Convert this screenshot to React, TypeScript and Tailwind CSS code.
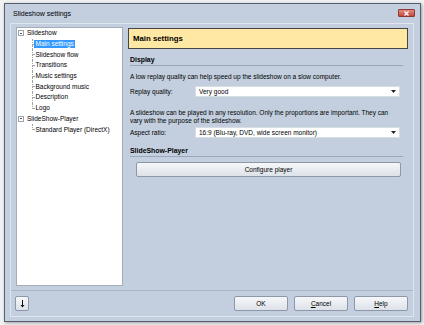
const font = { fontFamily: '"Liberation Sans", Arial, sans-serif' };

const treeItems = [
  { label: 'Slideshow', level: 0 },
  { label: 'Main settings', level: 1, selected: true },
  { label: 'Slideshow flow', level: 1 },
  { label: 'Transitions', level: 1 },
  { label: 'Music settings', level: 1 },
  { label: 'Background music', level: 1 },
  { label: 'Description', level: 1 },
  { label: 'Logo', level: 1, last: true },
  { label: 'SlideShow-Player', level: 0 },
  { label: 'Standard Player (DirectX)', level: 1, last: true },
];

function Expander() {
  return (
    <span className="w-[6px] h-[6px] border border-[#9aa3ae] bg-white flex items-center justify-center shrink-0">
      <span className="w-[2px] h-px bg-[#4b5563]" />
    </span>
  );
}

function TreeRow({ label, level, selected, last }: { label: string; level: number; selected?: boolean; last?: boolean }) {
  if (level === 0) {
    return (
      <div className="h-[10.7px] flex items-center pl-[1px]">
        <Expander />
        <span className="ml-[3px] text-[6.5px] leading-[8px] text-black">{label}</span>
      </div>
    );
  }
  return (
    <div className="h-[10.7px] flex items-stretch pl-[15px]">
      <span className="w-[2px] flex flex-col shrink-0">
        <span className="flex-1 border-l border-b border-dotted border-[#9ca3af]" />
        <span className={last ? 'flex-1' : 'flex-1 border-l border-dotted border-[#9ca3af]'} />
      </span>
      <span className="flex items-center">
        <span
          className={
            selected
              ? 'text-[6.5px] leading-[8px] h-[8px] px-[1.5px] bg-[#3399ff] text-white'
              : 'text-[6.5px] leading-[8px] h-[8px] px-[1.5px] text-black'
          }
        >
          {label}
        </span>
      </span>
    </div>
  );
}

function Select({ value }: { value: string }) {
  return (
    <div className="w-[205px] h-[11px] bg-white border border-[#d7dde5] flex items-center justify-between pl-[3px] pr-[3px]">
      <span className="text-[6.5px] leading-[8px] text-black">{value}</span>
      <svg width="5" height="3" viewBox="0 0 5 3">
        <path d="M0 0h5L2.5 3z" fill="#222" />
      </svg>
    </div>
  );
}

function Button({ children, className = '' }: { children: React.ReactNode; className?: string }) {
  return (
    <button
      className={
        'h-[15px] rounded-[2px] border border-[#8c97a7] bg-gradient-to-b from-[#f6f7f9] to-[#dde2e9] text-[6.5px] leading-[8px] text-black flex items-center justify-center ' +
        className
      }
    >
      {children}
    </button>
  );
}

function Heading({ children }: { children: React.ReactNode }) {
  return (
    <div className="h-[12px] mx-[2px] mr-[5px] border-b border-[#9ba7b8] flex items-center">
      <span className="text-[6.9px] leading-[8px] font-bold text-black">{children}</span>
    </div>
  );
}

export default function App() {
  return (
    <div className="w-[424px] h-[325px] bg-[#f0f1f3] pt-[3px] pl-[4px]" style={font}>
      <div className="w-[417px] h-[319px] border border-[#56606d] bg-[#c3cfdf] flex flex-col shadow-[1px_1px_3px_rgba(0,0,0,0.35)]">
        {/* title bar */}
        <div className="h-[19px] flex items-center justify-between pl-[8px] pr-[5px] shrink-0">
          <span className="text-[7px] leading-[8px] text-black">Slideshow settings</span>
          <span className="w-[17px] h-[8px] mt-[-1px] rounded-[1px] border border-[#8a3a34] bg-gradient-to-b from-[#e38a80] to-[#c4473d] flex items-center justify-center">
            <svg width="5" height="5" viewBox="0 0 5 5">
              <path d="M0.5 0.5l4 4M4.5 0.5l-4 4" stroke="#fff" strokeWidth="1.3" />
            </svg>
          </span>
        </div>

        {/* inner frame */}
        <div className="flex-1 ml-[5px] mr-[6px] mb-[4px] border border-[#dfe6ef] flex flex-col">
          <div className="flex-1 flex pt-[3px] pl-[5px] pr-[5px] gap-[5px]">
            {/* tree */}
            <div className="w-[107px] bg-white border border-[#a3adba]">
              {treeItems.map((t) => (
                <TreeRow key={t.label} {...t} />
              ))}
            </div>

            {/* content */}
            <div className="flex-1 flex flex-col">
              <div className="h-[21px] bg-[#ffe8a3] border border-[#454545] flex items-center pl-[4px] mt-px">
                <span className="text-[7.8px] leading-[10px] font-bold text-black">Main settings</span>
              </div>

              <div className="mt-[5px]">
                <Heading>Display</Heading>
              </div>

              <p className="mt-[6px] pl-[2px] text-[6.5px] leading-[9px] text-black">
                A low replay quality can help speed up the slideshow on a slow computer.
              </p>

              <div className="mt-[5px] pl-[2px] flex items-center">
                <span className="w-[65px] text-[6.5px] leading-[8px] text-black">Replay quality:</span>
                <Select value="Very good" />
              </div>

              <p className="mt-[12px] pl-[2px] text-[6.5px] leading-[8px] text-black">
                A slideshow can be played in any resolution. Only the proportions are important. They can
                <br />
                vary with the purpose of the slideshow.
              </p>

              <div className="mt-[2px] pl-[2px] flex items-center">
                <span className="w-[65px] text-[6.5px] leading-[8px] text-black">Aspect ratio:</span>
                <Select value="16:9 (Blu-ray, DVD, wide screen monitor)" />
              </div>

              <div className="mt-[7px]">
                <Heading>SlideShow-Player</Heading>
              </div>

              <div className="mt-[5px] ml-[8px] mr-[7px]">
                <Button className="w-full h-[14px]">Configure player</Button>
              </div>
            </div>
          </div>

          {/* bottom bar */}
          <div className="h-[26px] mt-[4px] border-t border-[#a9b4c4] flex items-center pl-[4px] pr-[5px] shrink-0">
            <Button className="w-[14px]">
              <svg width="5" height="8" viewBox="0 0 5 8">
                <path d="M2.5 0v6" stroke="#111" strokeWidth="1" />
                <path d="M0.5 5h4L2.5 7.5z" fill="#111" />
              </svg>
            </Button>
            <div className="flex-1" />
            <div className="flex gap-[6px]">
              <Button className="w-[54px]">OK</Button>
              <Button className="w-[54px]">
                <span>
                  <span className="underline">C</span>ancel
                </span>
              </Button>
              <Button className="w-[54px]">
                <span>
                  <span className="underline">H</span>elp
                </span>
              </Button>
            </div>
          </div>
        </div>
      </div>
    </div>
  );
}
